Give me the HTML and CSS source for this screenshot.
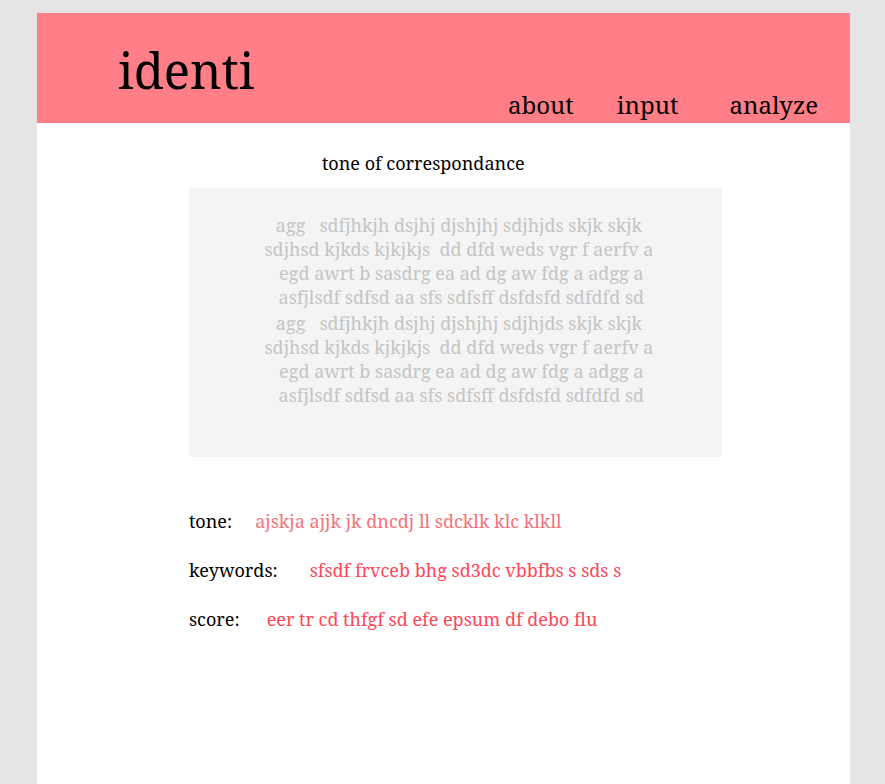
FILE: index.html
```html
<!DOCTYPE html>
<html lang="en">
<head>
<meta charset="utf-8">
<title>identi</title>
<link rel="stylesheet" href="styles.css">
</head>
<body>
<div class="page">
  <header class="header">
    <h1 class="brand">identi</h1>
    <nav class="nav">
      <a href="#about">about</a>
      <a href="#input">input</a>
      <a class="last" href="#analyze">analyze</a>
    </nav>
  </header>
  <main class="content">
    <h2 class="title">tone of correspondance</h2>
    <div class="sample">
      <p>agg   sdfjhkjh dsjhj djshjhj sdjhjds skjk skjk
sdjhsd kjkds kjkjkjs  dd dfd weds vgr f aerfv a
 egd awrt b sasdrg ea ad dg aw fdg a adgg a
 asfjlsdf sdfsd aa sfs sdfsff dsfdsfd sdfdfd sd</p>
      <p>agg   sdfjhkjh dsjhj djshjhj sdjhjds skjk skjk
sdjhsd kjkds kjkjkjs  dd dfd weds vgr f aerfv a
 egd awrt b sasdrg ea ad dg aw fdg a adgg a
 asfjlsdf sdfsd aa sfs sdfsff dsfdsfd sdfdfd sd</p>
    </div>
    <dl class="results">
      <div class="row tone"><dt>tone:</dt><dd>ajskja ajjk jk dncdj ll sdcklk klc klkll</dd></div>
      <div class="row keywords"><dt>keywords:</dt><dd>sfsdf frvceb bhg sd3dc vbbfbs s sds s</dd></div>
      <div class="row score"><dt>score:</dt><dd>eer tr cd thfgf sd efe epsum df debo flu</dd></div>
    </dl>
  </main>
</div>
</body>
</html>
```
FILE: styles.css
```css
* { box-sizing: border-box; }
body {
  margin: 0;
  padding: 13px 35px 0 37px;
  background: #e5e5e5;
  color: #000;
  font-family: "Roboto Slab", "Noto Serif", "DejaVu Serif", serif;
  font-size: 18px;
}
h1, h2, p, dl, dd { margin: 0; font-weight: 400; }
.page {
  display: flex;
  flex-direction: column;
  min-height: calc(100vh - 13px);
  background: #fff;
}
.header {
  display: flex;
  justify-content: space-between;
  padding: 0 32px 0 81px;
  background: #ff7e87;
}
.brand { height: 110px; font-size: 49px; line-height: 114px; }
.nav {
  display: flex;
  align-items: flex-end;
  gap: 43px;
  font-size: 24px;
  line-height: 36px;
}
.nav a { color: inherit; text-decoration: none; }
.nav .last { margin-left: 8px; }
.content { padding: 24px 128px 0 152px; }
.title { padding-left: 133px; font-size: 18px; line-height: 32px; }
.sample {
  display: grid;
  gap: 2px;
  margin-top: 9px;
  padding: 25px 0 50px 7px;
  background: #f4f4f4;
  color: #c4c4c4;
  line-height: 24px;
  text-align: center;
}
.sample p { white-space: pre; }
.results { display: grid; gap: 25px; margin-top: 52px; line-height: 24px; }
.row { display: flex; white-space: nowrap; }
.row dd { color: #ff4657; }
.tone { gap: 23px; }
.keywords { gap: 32px; }
.score { gap: 27px; }
.tone dd { color: #f47279; }
```
